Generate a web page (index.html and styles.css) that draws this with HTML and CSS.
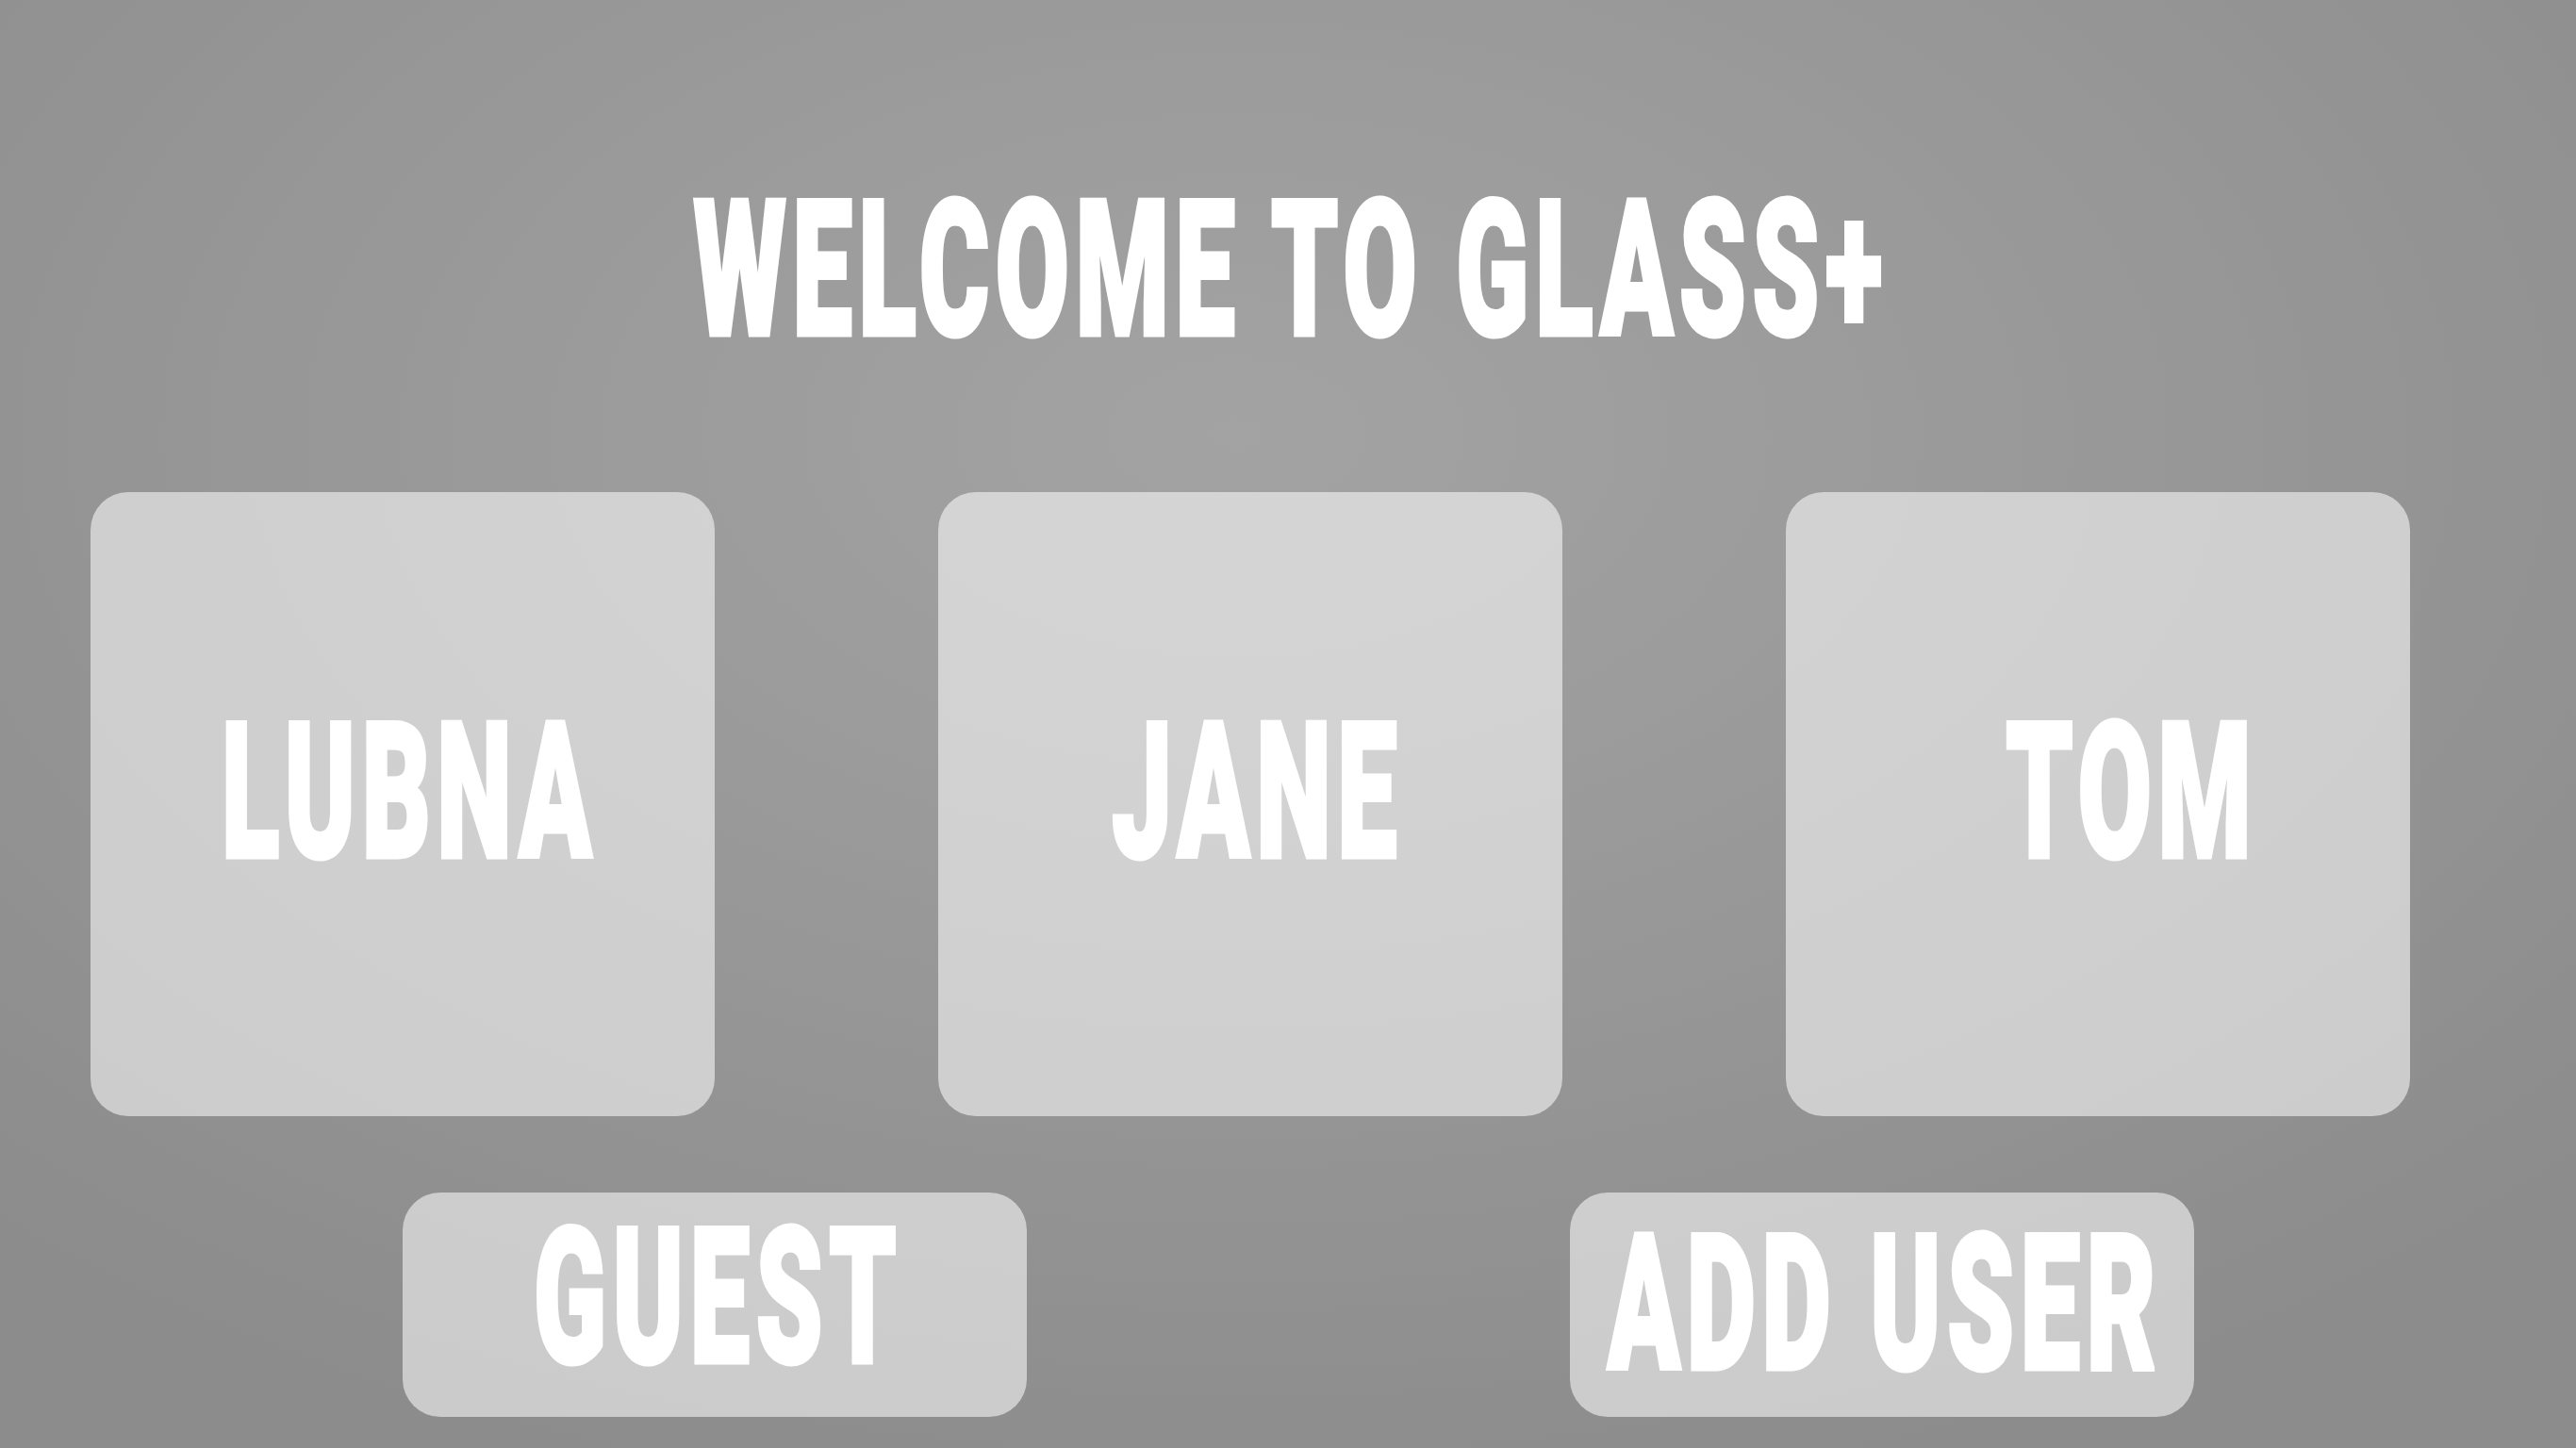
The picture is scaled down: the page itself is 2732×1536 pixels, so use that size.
FILE: index.html
```html
<!DOCTYPE html>
<html lang="en">
<head>
<meta charset="utf-8">
<title>Welcome to Glass+</title>
<link rel="stylesheet" href="styles.css">
</head>
<body>
<main class="screen">
  <h1 class="title"><span class="squeeze">WELCOME TO GLASS+</span></h1>
  <section class="users">
    <button class="tile"><span class="squeeze">LUBNA</span></button>
    <button class="tile"><span class="squeeze">JANE</span></button>
    <button class="tile tile-tom"><span class="squeeze">TOM</span></button>
  </section>
  <section class="actions">
    <button class="pill pill-guest"><span class="squeeze">GUEST</span></button>
    <button class="pill pill-add"><span class="squeeze">ADD USER</span></button>
  </section>
</main>
</body>
</html>
```
FILE: styles.css
```css
html, body {
  margin: 0;
  padding: 0;
}
body {
  width: 2732px;
  height: 1536px;
  overflow: hidden;
  background: radial-gradient(ellipse 70% 75% at 48% 30%, #a3a3a3 0%, #999999 45%, #8c8c8c 100%);
  font-family: Roboto, "Liberation Sans", sans-serif;
  color: #ffffff;
}
.screen {
  display: flex;
  flex-direction: column;
  height: 1536px;
}
.squeeze {
  display: inline-block;
  transform: scaleX(0.565);
  white-space: nowrap;
  letter-spacing: 12px;
  padding-left: 12px;
  -webkit-text-stroke: 5px #ffffff;
}
.title {
  margin: 187px 0 0 0;
  font-size: 200px;
  line-height: 200px;
  font-weight: 900;
  text-align: center;
  height: 200px;
}
.users {
  display: flex;
  gap: 237px;
  padding-left: 96px;
  margin-top: 135px;
}
.tile, .pill {
  border: none;
  background: rgba(255, 255, 255, 0.55);
  color: #ffffff;
  font-family: Roboto, "Liberation Sans", sans-serif;
  font-weight: 900;
  font-size: 200px;
  line-height: 200px;
  display: flex;
  align-items: center;
  justify-content: center;
  padding: 0;
}
.tile {
  width: 662px;
  height: 662px;
  border-radius: 40px;
  padding-bottom: 24px;
  padding-left: 8px;
}
.tile-tom {
  padding-left: 64px;
}
.actions {
  display: flex;
  gap: 576px;
  padding-left: 427px;
  margin-top: 81px;
}
.pill {
  width: 662px;
  height: 238px;
  border-radius: 40px;
}
.pill-guest {
  padding-bottom: 14px;
}
```
